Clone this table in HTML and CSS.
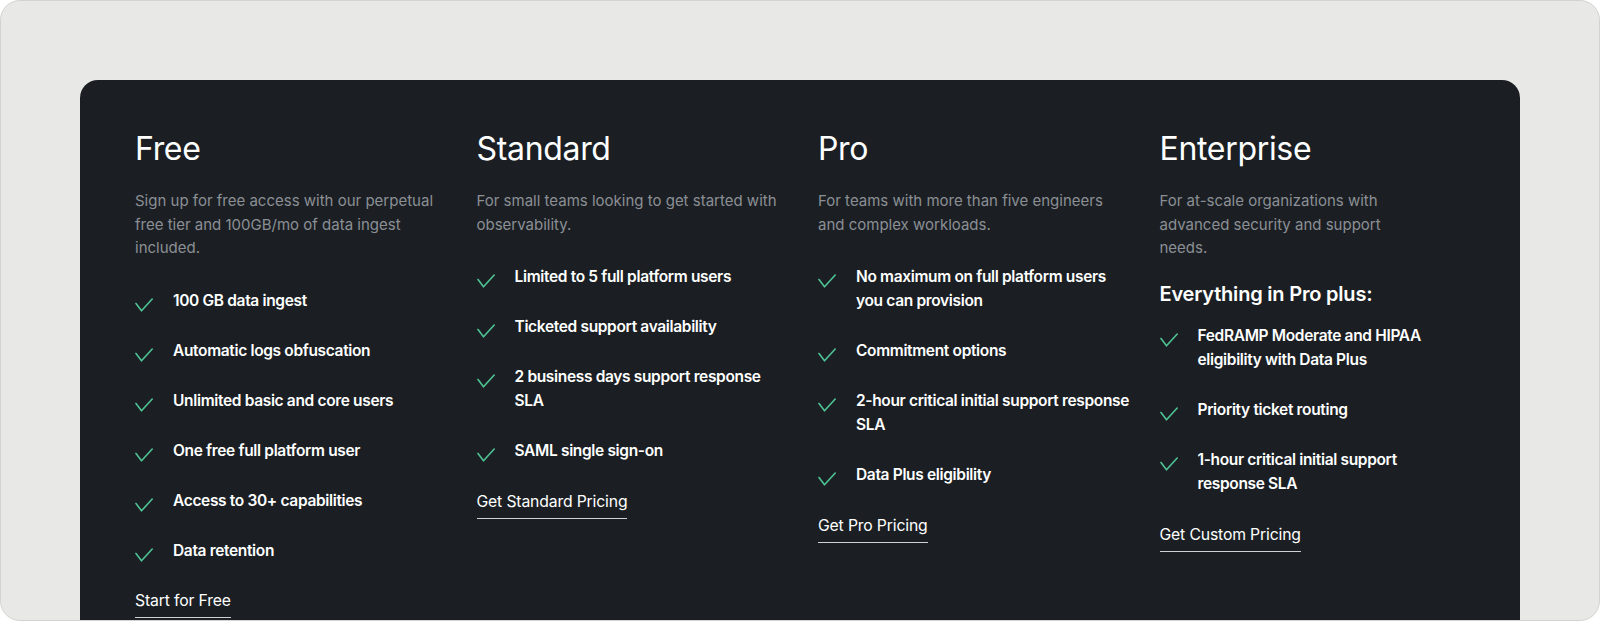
FILE: index.html
```html
<!DOCTYPE html>
<html lang="en">
<head>
<meta charset="utf-8">
<title>Pricing</title>
<link rel="stylesheet" href="styles.css">
</head>
<body>
<div class="frame">
  <section class="card">
    <div class="plan">
      <h2 class="plan-title">Free</h2>
      <p class="plan-desc">Sign up for free access with our perpetual free tier and 100GB/mo of data ingest included.</p>
      <ul class="features">
        <li><svg class="check" viewBox="0 0 18 14"><polyline points="1,5.5 6.5,12.8 17.2,1"/></svg><span>100 GB data ingest</span></li>
        <li><svg class="check" viewBox="0 0 18 14"><polyline points="1,5.5 6.5,12.8 17.2,1"/></svg><span>Automatic logs obfuscation</span></li>
        <li><svg class="check" viewBox="0 0 18 14"><polyline points="1,5.5 6.5,12.8 17.2,1"/></svg><span>Unlimited basic and core users</span></li>
        <li><svg class="check" viewBox="0 0 18 14"><polyline points="1,5.5 6.5,12.8 17.2,1"/></svg><span>One free full platform user</span></li>
        <li><svg class="check" viewBox="0 0 18 14"><polyline points="1,5.5 6.5,12.8 17.2,1"/></svg><span>Access to 30+ capabilities</span></li>
        <li><svg class="check" viewBox="0 0 18 14"><polyline points="1,5.5 6.5,12.8 17.2,1"/></svg><span>Data retention</span></li>
      </ul>
      <a class="plan-link" href="#">Start for Free</a>
    </div>
    <div class="plan">
      <h2 class="plan-title">Standard</h2>
      <p class="plan-desc">For small teams looking to get started with observability.</p>
      <ul class="features">
        <li><svg class="check" viewBox="0 0 18 14"><polyline points="1,5.5 6.5,12.8 17.2,1"/></svg><span>Limited to 5 full platform users</span></li>
        <li><svg class="check" viewBox="0 0 18 14"><polyline points="1,5.5 6.5,12.8 17.2,1"/></svg><span>Ticketed support availability</span></li>
        <li><svg class="check" viewBox="0 0 18 14"><polyline points="1,5.5 6.5,12.8 17.2,1"/></svg><span>2 business days support response SLA</span></li>
        <li><svg class="check" viewBox="0 0 18 14"><polyline points="1,5.5 6.5,12.8 17.2,1"/></svg><span>SAML single sign-on</span></li>
      </ul>
      <a class="plan-link" href="#">Get Standard Pricing</a>
    </div>
    <div class="plan">
      <h2 class="plan-title">Pro</h2>
      <p class="plan-desc">For teams with more than five engineers and complex workloads.</p>
      <ul class="features">
        <li><svg class="check" viewBox="0 0 18 14"><polyline points="1,5.5 6.5,12.8 17.2,1"/></svg><span>No maximum on full platform users you can provision</span></li>
        <li><svg class="check" viewBox="0 0 18 14"><polyline points="1,5.5 6.5,12.8 17.2,1"/></svg><span>Commitment options</span></li>
        <li><svg class="check" viewBox="0 0 18 14"><polyline points="1,5.5 6.5,12.8 17.2,1"/></svg><span>2-hour critical initial support response SLA</span></li>
        <li><svg class="check" viewBox="0 0 18 14"><polyline points="1,5.5 6.5,12.8 17.2,1"/></svg><span>Data Plus eligibility</span></li>
      </ul>
      <a class="plan-link" href="#">Get Pro Pricing</a>
    </div>
    <div class="plan plan-narrow">
      <h2 class="plan-title">Enterprise</h2>
      <p class="plan-desc">For at-scale organizations with advanced security and support needs.</p>
      <h3 class="plan-sub">Everything in Pro plus:</h3>
      <ul class="features features-tight">
        <li><svg class="check" viewBox="0 0 18 14"><polyline points="1,5.5 6.5,12.8 17.2,1"/></svg><span>FedRAMP Moderate and HIPAA eligibility with Data Plus</span></li>
        <li><svg class="check" viewBox="0 0 18 14"><polyline points="1,5.5 6.5,12.8 17.2,1"/></svg><span>Priority ticket routing</span></li>
        <li><svg class="check" viewBox="0 0 18 14"><polyline points="1,5.5 6.5,12.8 17.2,1"/></svg><span>1-hour critical initial support response SLA</span></li>
      </ul>
      <a class="plan-link" href="#">Get Custom Pricing</a>
    </div>
  </section>
</div>
</body>
</html>
```

FILE: styles.css
```css
* {
  box-sizing: border-box;
}

html, body {
  margin: 0;
  padding: 0;
  background: #ffffff;
}

body {
  font-family: Inter, "Noto Sans", "Liberation Sans", sans-serif;
  -webkit-font-smoothing: antialiased;
}

.frame {
  width: 1600px;
  height: 621px;
  background: #e8e8e6;
  border: 1px solid #d3d3d1;
  border-radius: 20px;
  overflow: hidden;
  padding: 79px 0 0 79px;
}

.card {
  width: 1440px;
  min-height: 600px;
  background: #1b1f24;
  border-radius: 18px;
  padding: 49px 0 0 55px;
  display: grid;
  grid-template-columns: 313px 313px 313px 280px;
  column-gap: 28.5px;
  align-items: start;
}

.plan {
  display: flex;
  flex-direction: column;
  align-items: flex-start;
}

.plan-title {
  margin: 0 0 20px;
  font-size: 32px;
  line-height: 40px;
  font-weight: 400;
  color: #ffffff;
  letter-spacing: -0.01em;
}

.plan-desc {
  margin: 0;
  font-size: 15px;
  line-height: 23.5px;
  font-weight: 400;
  color: #8b8f94;
}

.plan-narrow .plan-desc {
  max-width: 265px;
}

.plan-sub {
  margin: 20px 0 0;
  font-size: 20px;
  line-height: 28px;
  font-weight: 600;
  color: #ffffff;
  letter-spacing: -0.01em;
}

.features {
  list-style: none;
  margin: 29px 0 0;
  padding: 0;
  display: flex;
  flex-direction: column;
  gap: 26px;
}

.features-tight {
  margin-top: 16px;
}

.features li {
  display: flex;
  align-items: flex-start;
  font-size: 15.5px;
  line-height: 24px;
  font-weight: 600;
  color: #ffffff;
  letter-spacing: -0.022em;
}

.features li span {
  max-width: 276px;
}

.plan-narrow .features li span {
  max-width: 242px;
}

.check {
  flex: none;
  width: 18px;
  height: 14px;
  margin: 9px 20px 0 0;
  fill: none;
  stroke: #4ec393;
  stroke-width: 1.6;
  stroke-linecap: round;
  stroke-linejoin: round;
}

.plan-link {
  margin-top: 26.5px;
  font-size: 15.75px;
  line-height: 24px;
  color: #ffffff;
  text-decoration: none;
  padding-bottom: 4px;
  border-bottom: 1px solid #cfd1d3;
  letter-spacing: -0.01em;
}

.plan-narrow .plan-link {
  margin-top: 27px;
}
```
